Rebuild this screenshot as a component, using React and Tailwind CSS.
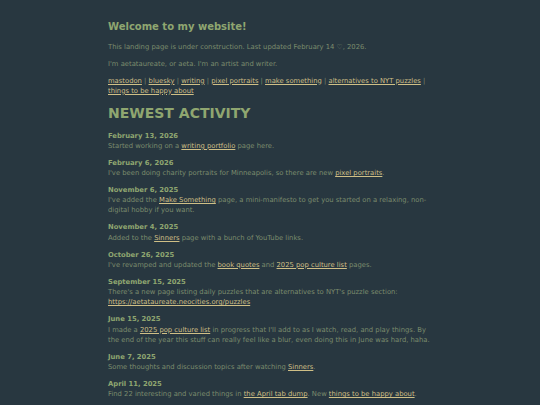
import React from "react";

const A = ({ children }) => (
  <a href="#" className="text-[#cfbf86] underline underline-offset-[1px]">
    {children}
  </a>
);

const Sep = () => <span> | </span>;

const entries = [
  ["February 13, 2026", <>Started working on a <A>writing portfolio</A> page here.</>],
  ["February 6, 2026", <>I've been doing charity portraits for Minneapolis, so there are new <A>pixel portraits</A>.</>],
  ["November 6, 2025", <>I've added the <A>Make Something</A> page, a mini-manifesto to get you started on a relaxing, non-digital hobby if you want.</>],
  ["November 4, 2025", <>Added to the <A>Sinners</A> page with a bunch of YouTube links.</>],
  ["October 26, 2025", <>I've revamped and updated the <A>book quotes</A> and <A>2025 pop culture list</A> pages.</>],
  ["September 15, 2025", <>There's a new page listing daily puzzles that are alternatives to NYT's puzzle section: <A>https://aetataureate.neocities.org/puzzles</A></>],
  ["June 15, 2025", <>I made a <A>2025 pop culture list</A> in progress that I'll add to as I watch, read, and play things. By the end of the year this stuff can really feel like a blur, even doing this in June was hard, haha.</>],
  ["June 7, 2025", <>Some thoughts and discussion topics after watching <A>Sinners</A>.</>],
  ["April 11, 2025", <>Find 22 interesting and varied things in <A>the April tab dump</A>. New <A>things to be happy about</A>.</>],
];

export default function App() {
  return (
    <div
      className="min-h-screen bg-[#283740] text-[#7b8c6d]"
      style={{ fontFamily: '"DejaVu Sans", Verdana, sans-serif' }}
    >
      <div className="mx-auto w-[324px] pt-[20.7px] pb-4">
        <h1 className="text-[10px] leading-[12px] font-bold text-[#8fa670] mb-[8.9px]">
          Welcome to my website!
        </h1>
        <p className="text-[6.8px] leading-[10.2px] mb-[6.8px]">
          This landing page is under construction. Last updated February 14 ♡, 2026.
        </p>
        <p className="text-[6.8px] leading-[10.2px] mb-[6.8px]">
          I'm aetataureate, or aeta. I'm an artist and writer.
        </p>
        <p className="text-[6.8px] leading-[10.2px] mb-[9px]">
          <A>mastodon</A>
          <Sep />
          <A>bluesky</A>
          <Sep />
          <A>writing</A>
          <Sep />
          <A>pixel portraits</A>
          <Sep />
          <A>make something</A>
          <Sep />
          <A>alternatives to NYT puzzles</A>
          <Sep />
          <A>things to be happy about</A>
        </p>
        <h2 className="text-[14px] leading-[16.8px] font-bold text-[#8fa670] mb-[8.9px]">
          NEWEST ACTIVITY
        </h2>
        <div className="flex flex-col gap-[6.8px]">
          {entries.map(([date, body]) => (
            <p key={date} className="text-[6.8px] leading-[10.2px]">
              <b className="text-[#8fa670]">{date}</b>
              <br />
              {body}
            </p>
          ))}
        </div>
      </div>
    </div>
  );
}
